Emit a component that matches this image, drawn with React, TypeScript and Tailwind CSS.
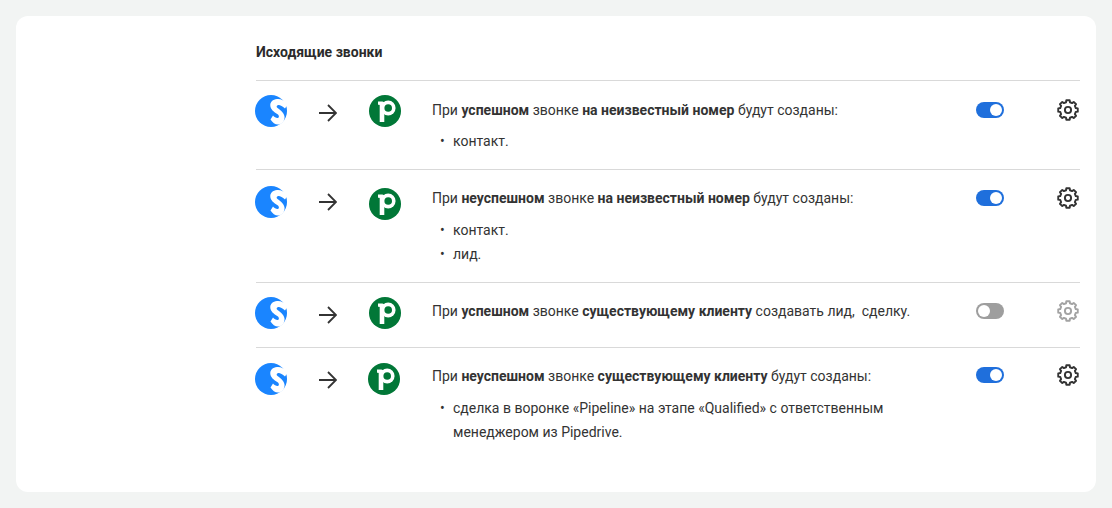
import type { ReactNode } from "react";

type Row = {
  text: ReactNode;
  items?: string[];
  on: boolean;
  height: string;
  sourceTop: string;
  targetClass: string;
  textTop: string;
  listTop: string;
  toggleTop: string;
  gearTop: string;
};

const ROWS: Row[] = [
  {
    text: (
      <>
        При <b>успешном</b> звонке <b>на неизвестный номер</b> будут созданы:
      </>
    ),
    items: ["контакт."],
    on: true,
    height: "h-[89px]",
    sourceTop: "-mt-[3px]",
    targetClass: "-mt-[3px] ml-8",
    textTop: "mt-0",
    listTop: "mt-[7px]",
    toggleTop: "mt-1",
    gearTop: "mt-0",
  },
  {
    text: (
      <>
        При <b>неуспешном</b> звонке <b>на неизвестный номер</b> будут созданы:
      </>
    ),
    items: ["контакт.", "лид."],
    on: true,
    height: "h-[113px]",
    sourceTop: "-mt-px",
    targetClass: "mt-px ml-8",
    textTop: "-mt-px",
    listTop: "mt-2",
    toggleTop: "mt-[3px]",
    gearTop: "-mt-px",
  },
  {
    text: (
      <>
        При <b>успешном</b> звонке <b>существующему клиенту</b> создавать лид,&nbsp; сделку.
      </>
    ),
    on: false,
    height: "h-[65px]",
    sourceTop: "-mt-[3px]",
    targetClass: "-mt-[3px] ml-8",
    textTop: "-mt-px",
    listTop: "mt-2",
    toggleTop: "mt-[3px]",
    gearTop: "-mt-px",
  },
  {
    text: (
      <>
        При <b>неуспешном</b> звонке <b>существующему клиенту</b> будут созданы:
      </>
    ),
    items: ["сделка в воронке «Pipeline» на этапе «Qualified» с ответственным менеджером из Pipedrive."],
    on: true,
    height: "h-[127px]",
    sourceTop: "-mt-[2px]",
    targetClass: "-mt-[2px] ml-[31px]",
    textTop: "-mt-px",
    listTop: "mt-2",
    toggleTop: "mt-[2px]",
    gearTop: "-mt-[2px]",
  },
];

// 8-tooth outline, centre 12,12
const GEAR_PATH =
  Array.from({ length: 8 }, (_, k) => {
    const a = (k * Math.PI) / 4 - Math.PI / 2;
    const pt = (r: number, d: number) =>
      `${(12 + r * Math.cos(a + d)).toFixed(2)} ${(12 + r * Math.sin(a + d)).toFixed(2)}`;
    return `${k === 0 ? "M" : "L"}${pt(8, -0.25)} L${pt(9.9, -0.17)} L${pt(9.9, 0.17)} L${pt(8, 0.25)}`;
  }).join(" ") + " Z";

function Gear({ on, className }: { on: boolean; className: string }) {
  return (
    <svg
      width="24"
      height="24"
      viewBox="0 0 24 24"
      fill="none"
      stroke="currentColor"
      strokeWidth="1.9"
      strokeLinejoin="round"
      className={`ml-[52px] shrink-0 ${className} ${on ? "text-[#333]" : "text-[#a3a3a3]"}`}
    >
      <path d={GEAR_PATH} />
      <circle cx="12" cy="12" r="3.1" />
    </svg>
  );
}

function SourceLogo({ className }: { className: string }) {
  return (
    <svg width="32" height="32" viewBox="0 0 32 32" className={`shrink-0 ${className}`}>
      <circle cx="16" cy="16" r="16" fill="#1a85ff" />
      <path
        fill="#fff"
        d="M22 4C17 4.5 14.5 8 15.5 12C16.5 15.5 20 17.5 23 19.5C24.5 21 24 23 22.5 23C21 23 19 22 18 20.5L15.5 24.5C17.5 27.5 20 29.5 23 29.5C27 29.5 30 25.5 29.5 21.5C29 17 24 14.5 22 12.5C21 11 22.5 9.5 24 10C26 10.5 28 11.5 30 13.5L33 9C30 6 26 3.5 22 4Z"
      />
    </svg>
  );
}

function TargetLogo({ className }: { className: string }) {
  return (
    <svg width="32" height="32" viewBox="0 0 32 32" className={`shrink-0 ${className}`}>
      <circle cx="16" cy="16" r="16" fill="#017737" />
      <path fill="#fff" d="M9 6.5h4.3a2 2 0 0 1 2 2V27h-4.6V10.3a.6.6 0 0 0-.6-.6H9z" />
      <circle cx="19.2" cy="13" r="7.4" fill="#fff" />
      <circle cx="19.2" cy="13" r="3.8" fill="#017737" />
    </svg>
  );
}

function Arrow() {
  return (
    <svg width="18" height="18" viewBox="0 0 18 18" fill="none" stroke="#333" strokeWidth="1.8" className="ml-8 mt-1.5 shrink-0">
      <path d="M0 9h17M9 1l8 8-8 8" />
    </svg>
  );
}

function Toggle({ on, className }: { on: boolean; className: string }) {
  return (
    <div
      className={`ml-4 flex h-4 w-7 shrink-0 items-center rounded-full px-0.5 ${className} ${
        on ? "justify-end bg-[#1f6fdc]" : "justify-start bg-[#9e9e9e]"
      }`}
    >
      <div className="h-3 w-3 rounded-full bg-white" />
    </div>
  );
}

export default function App() {
  return (
    <div className="h-[508px] w-[1112px] bg-[#f2f4f3] p-4 font-['Roboto',sans-serif] text-sm leading-6 text-[#333]">
      <div className="h-[476px] rounded-xl bg-white pl-60 pr-4 pt-6">
        <h2 className="h-10 text-sm font-bold leading-6 text-[#2b2b2b]">Исходящие звонки</h2>
        {ROWS.map((row, i) => (
          <div key={i} className={`flex border-t border-[#d9d9d9] pt-[17px] ${row.height}`}>
            <div className="-ml-px flex w-[177px] shrink-0 items-start">
              <SourceLogo className={row.sourceTop} />
              <Arrow />
              <TargetLogo className={row.targetClass} />
            </div>
            <div className={`w-[528px] shrink-0 ${row.textTop}`}>
              <p>{row.text}</p>
              {row.items && (
                <ul className={row.listTop}>
                  {row.items.map((item) => (
                    <li key={item} className="relative pl-[21px] before:absolute before:left-2 before:top-0 before:content-['•']">
                      {item}
                    </li>
                  ))}
                </ul>
              )}
            </div>
            <Toggle on={row.on} className={row.toggleTop} />
            <Gear on={row.on} className={row.gearTop} />
          </div>
        ))}
      </div>
    </div>
  );
}
